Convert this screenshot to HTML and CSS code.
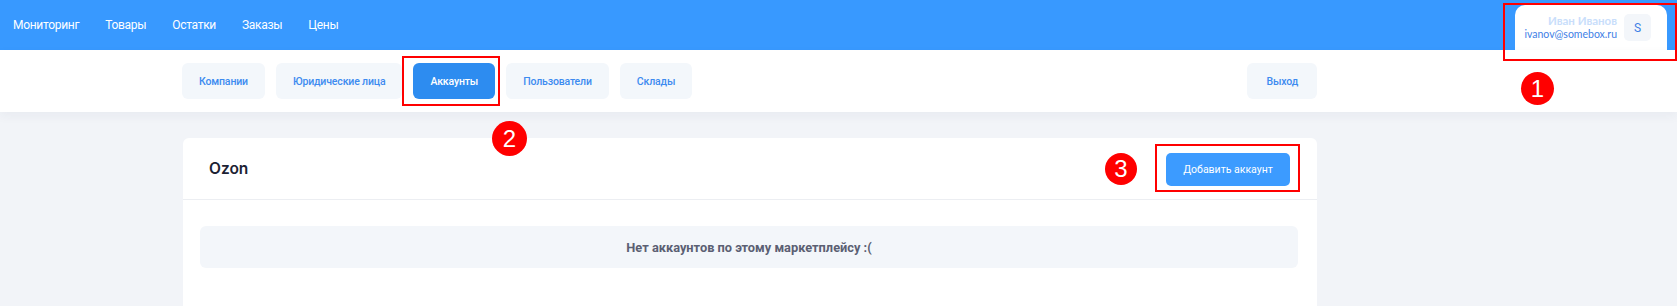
FILE: index.html
```html
<!DOCTYPE html>
<html lang="ru">
<head>
<meta charset="utf-8">
<title>Аккаунты</title>
<link rel="stylesheet" href="styles.css">
</head>
<body>
<header class="topbar">
  <nav class="mainnav">
    <a class="mainnav-link">Мониторинг</a>
    <a class="mainnav-link">Товары</a>
    <a class="mainnav-link">Остатки</a>
    <a class="mainnav-link">Заказы</a>
    <a class="mainnav-link">Цены</a>
  </nav>
  <div class="userbox">
    <div class="userbox-text">
      <div class="userbox-name">Иван Иванов</div>
      <div class="userbox-mail">ivanov@somebox.ru</div>
    </div>
    <div class="userbox-avatar">S</div>
  </div>
</header>
<div class="subnav">
  <a class="tab">Компании</a>
  <a class="tab">Юридические лица</a>
  <a class="tab tab-active">Аккаунты</a>
  <a class="tab">Пользователи</a>
  <a class="tab">Склады</a>
  <a class="tab tab-exit">Выход</a>
</div>
<main class="main">
  <section class="card">
    <div class="card-head">
      <h2 class="card-title">Ozon</h2>
      <button class="btn-add">Добавить аккаунт</button>
    </div>
    <div class="card-body">
      <div class="empty">Нет аккаунтов по этому маркетплейсу :(</div>
    </div>
  </section>
</main>
<div class="mark mark-1"></div>
<div class="mark mark-2"></div>
<div class="mark mark-3"></div>
<div class="badge badge-1">1</div>
<div class="badge badge-2">2</div>
<div class="badge badge-3">3</div>
</body>
</html>
```
FILE: styles.css
```css
* { box-sizing: border-box; }
html, body { margin: 0; padding: 0; }
body {
  background: #f2f4f8;
  font-family: Roboto, "Liberation Sans", Arial, sans-serif;
  width: 1677px;
  height: 306px;
  overflow: hidden;
  position: relative;
}
.topbar {
  height: 50px;
  background: #3899ff;
  display: flex;
  align-items: stretch;
  padding-left: 13px;
}
.mainnav {
  display: flex;
  align-items: center;
  gap: 26px;
}
.mainnav-link {
  color: #fff;
  font-size: 12px;
  letter-spacing: -0.3px;
}
.userbox {
  margin-left: auto;
  margin-right: 10px;
  margin-top: 5px;
  width: 152px;
  background: #fff;
  border-radius: 10px 10px 0 0;
  display: flex;
  align-items: flex-start;
  justify-content: flex-end;
  padding: 9px 16px 0 0;
  gap: 7px;
}
.userbox-text {
  text-align: right;
  font-family: Lato, "Noto Sans", sans-serif;
}
.userbox-name {
  color: #c9defb;
  font-size: 11.5px;
  font-weight: 700;
  line-height: 14px;
}
.userbox-mail {
  color: #3f7fe6;
  font-size: 10.5px;
  line-height: 13px;
}
.userbox-avatar {
  width: 27px;
  height: 27px;
  background: #f3f6fa;
  border-radius: 5px;
  color: #3f7fe6;
  font-size: 12px;
  display: flex;
  align-items: center;
  justify-content: center;
}
.subnav {
  height: 62px;
  width: 1677px;
  background: #fff;
  display: flex;
  align-items: center;
  gap: 11px;
  padding: 0 360px 0 182px;
  box-shadow: 0 4px 10px rgba(30, 50, 90, 0.05);
  position: relative;
}
.tab {
  height: 36px;
  padding: 0 17px;
  border-radius: 6px;
  background: #f3f7fb;
  color: #3d8bf0;
  font-size: 10.5px;
  letter-spacing: -0.15px;
  font-weight: 500;
  display: flex;
  align-items: center;
}
.tab-active {
  background: #2d8cf0;
  color: #fff;
}
.tab-exit {
  margin-left: auto;
  padding: 0 19px;
}
.main {
  padding: 26px 0 0 183px;
}
.card {
  width: 1134px;
  background: #fff;
  border-radius: 6px 6px 0 0;
  height: 200px;
}
.card-head {
  height: 62px;
  border-bottom: 1px solid #eceef2;
  display: flex;
  align-items: center;
  padding: 0 27px 0 26px;
}
.card-title {
  margin: 0;
  font-family: Inter, "Noto Sans", sans-serif;
  font-size: 15.5px;
  font-weight: 600;
  color: #1c2233;
}
.btn-add {
  margin-left: auto;
  width: 124px;
  height: 33px;
  border: none;
  border-radius: 5px;
  background: #3c9bff;
  color: #fff;
  font-family: Roboto, "Liberation Sans", sans-serif;
  font-size: 10.5px;
  margin-top: 2px;
}
.card-body {
  padding: 26px 19px 0 17px;
}
.empty {
  height: 42px;
  background: #f3f6fa;
  border-radius: 6px;
  display: flex;
  align-items: center;
  justify-content: center;
  color: #5b5f73;
  font-size: 12.8px;
  font-weight: 700;
}
.mark {
  position: absolute;
  border: 2px solid #ff0000;
}
.mark-1 { left: 1503px; top: 3px; width: 174px; height: 58px; }
.mark-2 { left: 402px; top: 56px; width: 98px; height: 50px; }
.mark-3 { left: 1155px; top: 144px; width: 145px; height: 48px; }
.badge {
  position: absolute;
  width: 33px;
  height: 33px;
  border-radius: 50%;
  background: #ff0000;
  color: #fff;
  font-family: "Liberation Sans", Arial, sans-serif;
  font-size: 24px;
  display: flex;
  align-items: center;
  justify-content: center;
}
.badge-1 { left: 1521px; top: 72px; }
.badge-2 { left: 492px; top: 121px; width: 35px; height: 35px; }
.badge-3 { left: 1105px; top: 153px; width: 32px; height: 32px; }
```
